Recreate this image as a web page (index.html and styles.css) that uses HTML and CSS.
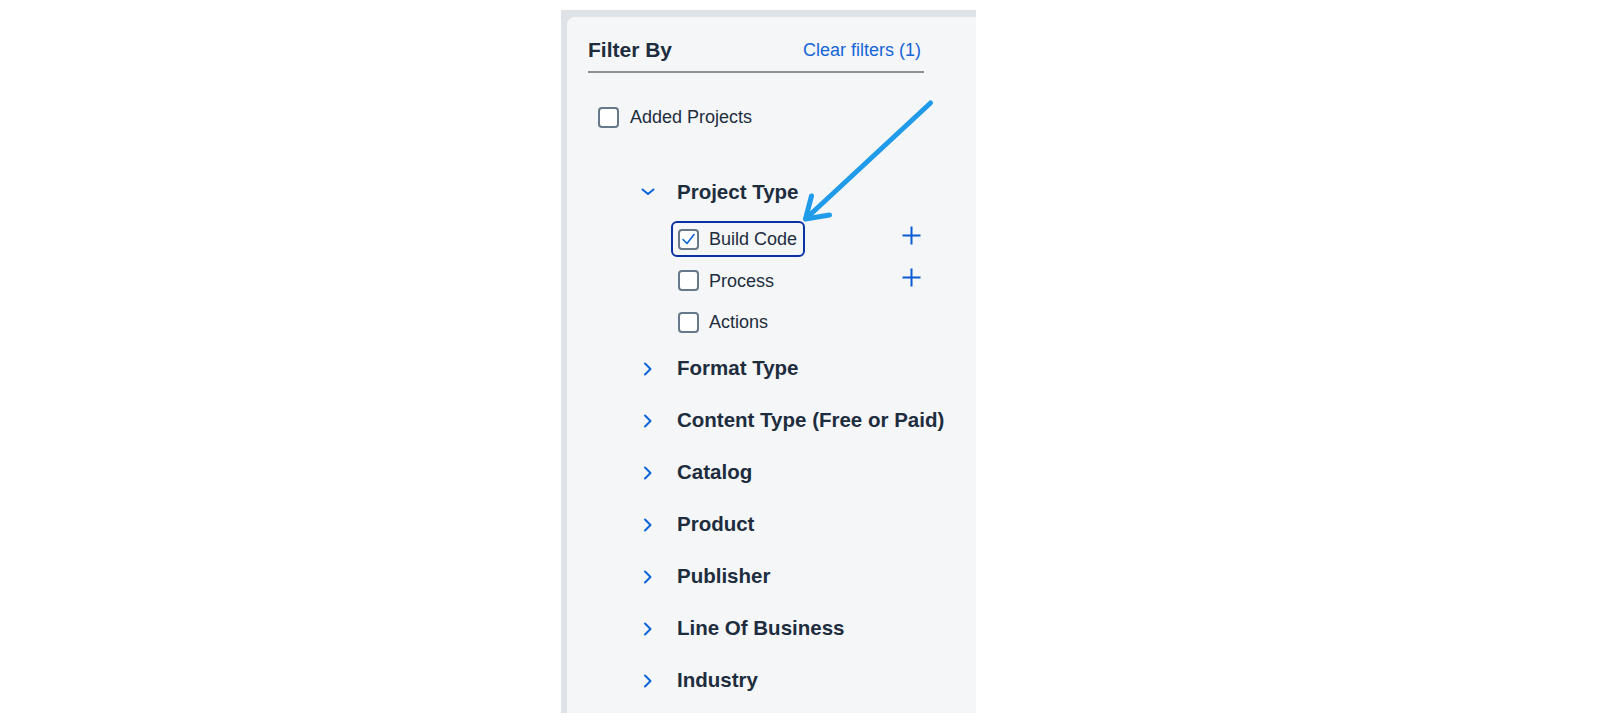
FILE: index.html
```html
<!DOCTYPE html>
<html lang="en">
<head>
<meta charset="utf-8">
<title>Filter By</title>
<link rel="stylesheet" href="styles.css">
</head>
<body>
<div class="frame">
  <aside class="panel">
    <div class="panel-header">
      <h2 class="title">Filter By</h2>
      <a class="clear-link" href="#">Clear filters (1)</a>
    </div>

    <label class="check-row added">
      <span class="checkbox"></span>
      <span class="check-text">Added Projects</span>
    </label>

    <ul class="tree">
      <li class="group open">
        <div class="group-head">
          <span class="chev"><svg viewBox="0 0 24 24" width="24" height="24"><path d="M6.5 9.5 L12 14 L17.5 9.5" /></svg></span>
          <span class="group-title">Project Type</span>
        </div>
        <ul class="items">
          <li class="item">
            <span class="item-label focused">
              <span class="checkbox checked"><svg viewBox="0 0 21 21" width="21" height="21"><path d="M5 10.5 L9 14.5 L16 5.5" /></svg></span>
              <span class="check-text">Build Code</span>
            </span>
            <span class="plus"><svg viewBox="0 0 19 19" width="19" height="19"><path d="M9.5 0.5 V18.5 M0.5 9.5 H18.5" /></svg></span>
          </li>
          <li class="item">
            <span class="item-label">
              <span class="checkbox"></span>
              <span class="check-text">Process</span>
            </span>
            <span class="plus"><svg viewBox="0 0 19 19" width="19" height="19"><path d="M9.5 0.5 V18.5 M0.5 9.5 H18.5" /></svg></span>
          </li>
          <li class="item">
            <span class="item-label">
              <span class="checkbox"></span>
              <span class="check-text">Actions</span>
            </span>
          </li>
        </ul>
      </li>
      <li class="group">
        <div class="group-head">
          <span class="chev"><svg viewBox="0 0 24 24" width="24" height="24"><path d="M9 6.5 L14.5 12 L9 17.5" /></svg></span>
          <span class="group-title">Format Type</span>
        </div>
      </li>
      <li class="group">
        <div class="group-head">
          <span class="chev"><svg viewBox="0 0 24 24" width="24" height="24"><path d="M9 6.5 L14.5 12 L9 17.5" /></svg></span>
          <span class="group-title">Content Type (Free or Paid)</span>
        </div>
      </li>
      <li class="group">
        <div class="group-head">
          <span class="chev"><svg viewBox="0 0 24 24" width="24" height="24"><path d="M9 6.5 L14.5 12 L9 17.5" /></svg></span>
          <span class="group-title">Catalog</span>
        </div>
      </li>
      <li class="group">
        <div class="group-head">
          <span class="chev"><svg viewBox="0 0 24 24" width="24" height="24"><path d="M9 6.5 L14.5 12 L9 17.5" /></svg></span>
          <span class="group-title">Product</span>
        </div>
      </li>
      <li class="group">
        <div class="group-head">
          <span class="chev"><svg viewBox="0 0 24 24" width="24" height="24"><path d="M9 6.5 L14.5 12 L9 17.5" /></svg></span>
          <span class="group-title">Publisher</span>
        </div>
      </li>
      <li class="group">
        <div class="group-head">
          <span class="chev"><svg viewBox="0 0 24 24" width="24" height="24"><path d="M9 6.5 L14.5 12 L9 17.5" /></svg></span>
          <span class="group-title">Line Of Business</span>
        </div>
      </li>
      <li class="group">
        <div class="group-head">
          <span class="chev"><svg viewBox="0 0 24 24" width="24" height="24"><path d="M9 6.5 L14.5 12 L9 17.5" /></svg></span>
          <span class="group-title">Industry</span>
        </div>
      </li>
    </ul>
  </aside>

  <svg class="annotation-arrow" viewBox="0 0 415 703" width="415" height="703">
    <path d="M369.5 93 L245 208.5" />
    <path d="M268.5 205 L244.5 209 L250.5 186" />
  </svg>
</div>
</body>
</html>
```

FILE: styles.css
```css
* {
  box-sizing: border-box;
}

html,
body {
  margin: 0;
  padding: 0;
  background: #ffffff;
}

body {
  font-family: "Liberation Sans", Arial, sans-serif;
  color: #1d2d3e;
}

.frame {
  position: relative;
  width: 415px;
  height: 703px;
  margin: 10px 0 0 561px;
  padding: 7px 0 0 6px;
  background: #dfe2e6;
  overflow: hidden;
}

.panel {
  height: 100%;
  padding: 16px 0 0 21px;
  background: #f5f6f7;
  border-top-left-radius: 8px;
}

.panel-header {
  display: flex;
  align-items: center;
  justify-content: space-between;
  width: 336px;
  height: 40px;
  padding: 0 3px 5px 0;
  border-bottom: 2px solid #8c8f93;
}

.title {
  margin: 0;
  font-size: 21px;
  font-weight: 700;
  line-height: 1;
  color: #1d2d3e;
}

.clear-link {
  font-size: 18px;
  line-height: 1;
  color: #1565d8;
  text-decoration: none;
}

.check-row {
  display: flex;
  align-items: center;
  gap: 11px;
  height: 40px;
  margin-top: 24px;
  padding-left: 10px;
}

.checkbox {
  display: inline-flex;
  align-items: center;
  justify-content: center;
  flex: none;
  width: 21px;
  height: 21px;
  border: 2px solid #66788a;
  border-radius: 4px;
  background: #ffffff;
}

.checkbox svg {
  display: block;
  margin: -2px;
  fill: none;
  stroke: #0a64d8;
  stroke-width: 1.6;
  stroke-linecap: round;
  stroke-linejoin: round;
}

.check-text {
  font-size: 18px;
  line-height: 1;
  color: #1d2d3e;
}

.tree,
.items {
  list-style: none;
  margin: 0;
  padding: 0;
}

.tree {
  margin-top: 29px;
}

.group-head {
  display: flex;
  align-items: center;
  gap: 17px;
  height: 52px;
  padding-left: 48px;
}

.chev {
  display: flex;
  align-items: center;
  justify-content: center;
  width: 24px;
  height: 24px;
}

.chev svg {
  display: block;
  fill: none;
  stroke: #0a64d8;
  stroke-width: 2;
  stroke-linecap: round;
  stroke-linejoin: round;
}

.group-title {
  font-size: 20.5px;
  font-weight: 700;
  line-height: 1;
  color: #1d2d3e;
  white-space: nowrap;
}

.items {
  display: flex;
  flex-direction: column;
  gap: 5.5px;
  padding: 3px 0 2.5px 83px;
}

.item {
  display: flex;
  align-items: center;
  justify-content: space-between;
  width: 250px;
  height: 36px;
}

.item-label {
  display: inline-flex;
  align-items: center;
  gap: 10px;
  height: 36px;
  padding: 0 6px 0 5px;
  border: 2px solid transparent;
  border-radius: 6px;
}

.item-label.focused {
  border-color: #0b32a3;
}

.plus {
  display: flex;
  margin-bottom: 7px;
}

.plus svg {
  display: block;
  fill: none;
  stroke: #0a5ad6;
  stroke-width: 2;
}

.annotation-arrow {
  position: absolute;
  top: 0;
  left: 0;
  overflow: visible;
  pointer-events: none;
  fill: none;
  stroke: #1f9be9;
  stroke-width: 5;
  stroke-linecap: round;
  stroke-linejoin: round;
}
```
